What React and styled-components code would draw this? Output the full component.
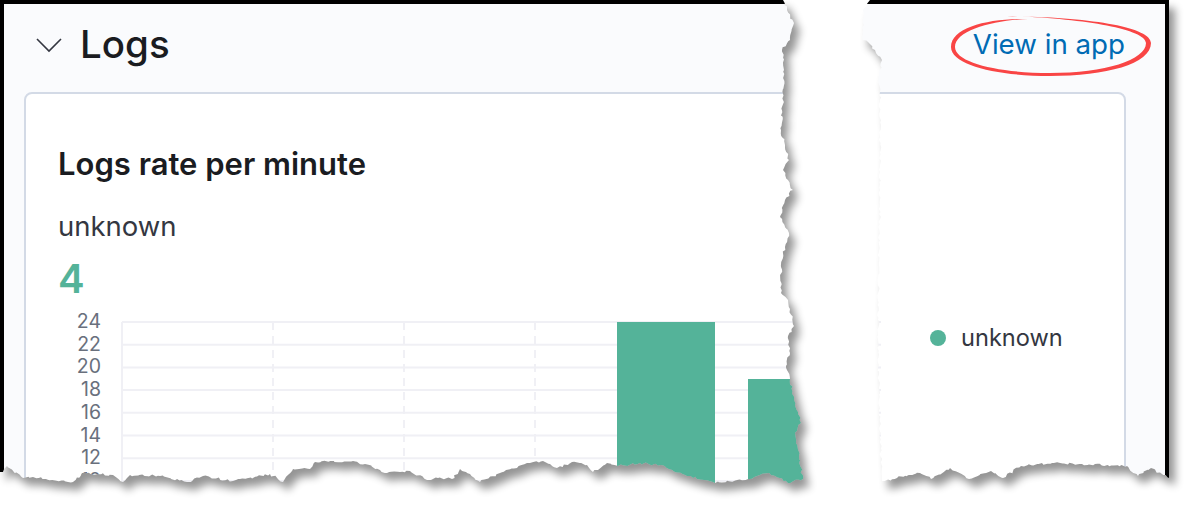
import React from "react";
import styled, { createGlobalStyle } from "styled-components";

/* torn paper edges: control points read off the screenshot, roughened below */
const leftEdge = [[783,0],[787,10],[794,23],[790,40],[782,50],[784,70],[783,100],[781,130],[785,145],[789,160],[783,170],[788,180],[793,190],[785,200],[780,217],[789,233],[785,247],[781,267],[781,293],[788,300],[790,309],[794,326],[788,336],[790,353],[786,366],[790,379],[794,399],[801,423],[795,433],[799,456],[803,479]];
const bottomLeft = [[788,483],[769,473],[750,479],[715,483],[687,476],[660,465],[640,463],[618,466],[607,463],[593,472],[587,465],[572,462],[557,468],[543,461],[530,463],[517,468],[500,473],[480,482],[470,474],[460,469],[452,479],[438,478],[427,480],[410,471],[400,472],[387,473],[380,470],[353,461],[315,462],[310,469],[293,469],[283,482],[270,474],[233,481],[203,476],[187,482],[160,476],[130,475],[123,482],[113,475],[82,473],[73,482],[33,477],[23,478],[7,466],[3,472],[0,472]];
const bottomRight = [[1169,478],[1151,468],[1138,476],[1127,466],[1082,464],[1052,463],[1021,466],[1003,478],[991,471],[969,479],[950,468],[931,479],[920,473],[882,481]];
const rightEdge = [[879,400],[878,300],[880,200],[880,92],[879,75],[882,60],[875,50],[868,42],[863,40],[863,10],[870,0]];

function roughen(points, seed, amount) {
  let s = seed;
  const rand = () => {
    s = (s * 9301 + 49297) % 233280;
    return s / 233280 - 0.5;
  };
  const out = [];
  points.forEach((p, i) => {
    out.push(p);
    const next = points[i + 1];
    if (!next) return;
    const steps = Math.floor(Math.hypot(next[0] - p[0], next[1] - p[1]) / 2.5);
    for (let k = 1; k < steps; k++) {
      const t = k / steps;
      out.push([
        p[0] + (next[0] - p[0]) * t + rand() * amount,
        p[1] + (next[1] - p[1]) * t + rand() * amount,
      ]);
    }
  });
  return out;
}

const toPath = (pts) =>
  "M" + pts.map((p) => `${p[0].toFixed(1)} ${p[1].toFixed(1)}`).join("L") + "Z";

const leftPiece = toPath([[0, 0], ...roughen([...leftEdge, ...bottomLeft], 17, 2.4)]);
const rightPiece = toPath([[1169, 0], ...roughen([...bottomRight, ...rightEdge], 91, 2.4)]);

const yTicks = [24, 22, 20, 18, 16, 14, 12, 10];
const xLines = [215, 346, 477];
const bars = [
  { x: 559, top: 12, width: 98 },
  { x: 690, top: 69, width: 98 },
];

export default function App() {
  return (
    <Page>
      <GlobalStyle />
      <Frame>
        <Header>
          <Toggle>
            <svg width="26" height="16" viewBox="0 0 26 16">
              <path d="M1 2l12 12L25 2" fill="none" stroke="#343741" strokeWidth="1.6" />
            </svg>
            <Title>Logs</Title>
          </Toggle>
          <AppLink>View in app</AppLink>
        </Header>
        <Card>
          <ChartColumn>
            <ChartTitle>Logs rate per minute</ChartTitle>
            <SeriesName>unknown</SeriesName>
            <SeriesValue>4</SeriesValue>
            <Chart width="823" height="200" viewBox="0 0 823 200">
              {yTicks.map((tick, i) => {
                const y = 12 + i * 22.7;
                return (
                  <g key={tick}>
                    <line x1="64" x2="823" y1={y} y2={y} stroke="#f0f0f5" strokeWidth="2" />
                    <AxisLabel x="43" y={y + 6} textAnchor="end">{tick}</AxisLabel>
                  </g>
                );
              })}
              <line x1="64" x2="64" y1="12" y2="200" stroke="#f0f0f5" strokeWidth="2" />
              {xLines.map((x) => (
                <line key={x} x1={x} x2={x} y1="12" y2="200" stroke="#f0f0f5" strokeWidth="2" strokeDasharray="8 6" />
              ))}
              {bars.map((bar) => (
                <rect key={bar.x} x={bar.x} y={bar.top} width={bar.width} height={200 - bar.top} fill="#54b399" />
              ))}
            </Chart>
          </ChartColumn>
          <Legend>
            <LegendDot />
            <LegendLabel>unknown</LegendLabel>
          </Legend>
        </Card>
      </Frame>

      <Overlay width="1190" height="532" viewBox="0 0 1190 532">
        <defs>
          <filter id="tornShadow" x="-5%" y="-5%" width="112%" height="115%">
            <feGaussianBlur in="SourceAlpha" stdDeviation="4.5" />
            <feOffset dx="6" dy="8" result="blurred" />
            <feComposite in="blurred" in2="SourceAlpha" operator="out" />
            <feComponentTransfer>
              <feFuncA type="linear" slope="0.42" />
            </feComponentTransfer>
          </filter>
        </defs>
        <path fillRule="evenodd" fill="#fff" d={`M0 0H1190V532H0Z${leftPiece}${rightPiece}`} />
        <path d={leftPiece} filter="url(#tornShadow)" />
        <path d={rightPiece} filter="url(#tornShadow)" />
        <path
          fill="#f94545"
          d="M1028 19C990 18 951 27 951 47C951 66 1000 76 1050 76C1106 76 1151 64 1151 43C1151 27 1090 17 1007 16C1080 18 1146 29 1146 43C1146 60 1105 73 1050 73C1000 73 955 63 955 47C955 30 995 20 1028 19Z"
        />
      </Overlay>
    </Page>
  );
}

/* STYLES */
const GlobalStyle = createGlobalStyle`
  body {
    margin: 0;
    background: #fff;
    font-family: Inter, "Liberation Sans", sans-serif;
  }
`;
const Page = styled.div`
  position: relative;
  width: 1190px;
  height: 532px;
  overflow: hidden;
`;
const Frame = styled.div`
  box-sizing: border-box;
  width: 1169px;
  height: 532px;
  border: 4px solid #000;
  border-bottom: none;
  background: #fafbfd;
  overflow: hidden;
`;
const Header = styled.div`
  display: flex;
  align-items: center;
  justify-content: space-between;
  height: 88px;
  padding: 0 40px 6px 32px;
  box-sizing: border-box;
`;
const Toggle = styled.div`
  display: flex;
  align-items: center;
  gap: 18px;
`;
const Title = styled.h2`
  margin: -2px 0 0;
  font-size: 38.5px;
  font-weight: 500;
  line-height: 48px;
  color: #1a1c21;
`;
const AppLink = styled.a`
  margin-top: -2px;
  font-size: 27.7px;
  line-height: 36px;
  color: #006bb4;
`;
const Card = styled.div`
  display: flex;
  box-sizing: border-box;
  width: 1102px;
  height: 500px;
  margin-left: 20px;
  padding: 0 32px;
  background: #fff;
  border: 2px solid #d3dae6;
  border-radius: 8px;
`;
const ChartColumn = styled.div`
  display: flex;
  flex-direction: column;
  flex: none;
  width: 823px;
`;
const ChartTitle = styled.h3`
  margin: 50px 0 0;
  font-size: 31px;
  font-weight: 600;
  line-height: 40px;
  color: #1a1c21;
`;
const SeriesName = styled.div`
  margin-top: 24px;
  font-size: 27.5px;
  line-height: 36px;
  color: #343741;
`;
const SeriesValue = styled.div`
  margin-top: 13px;
  font-size: 40px;
  font-weight: 600;
  line-height: 44px;
  color: #54b399;
`;
const Chart = styled.svg`
  display: block;
  flex: none;
  margin-top: 9px;
`;
const AxisLabel = styled.text`
  font-family: Inter, "Liberation Sans", sans-serif;
  font-size: 19.5px;
  fill: #69707d;
`;
const Legend = styled.div`
  display: flex;
  align-items: center;
  align-self: flex-start;
  gap: 15px;
  margin: 228px 0 0 49px;
`;
const LegendDot = styled.span`
  width: 16px;
  height: 16px;
  border-radius: 50%;
  background: #54b399;
`;
const LegendLabel = styled.span`
  font-size: 23.6px;
  line-height: 32px;
  color: #343741;
`;
const Overlay = styled.svg`
  position: absolute;
  top: 0;
  left: 0;
  pointer-events: none;
`;
